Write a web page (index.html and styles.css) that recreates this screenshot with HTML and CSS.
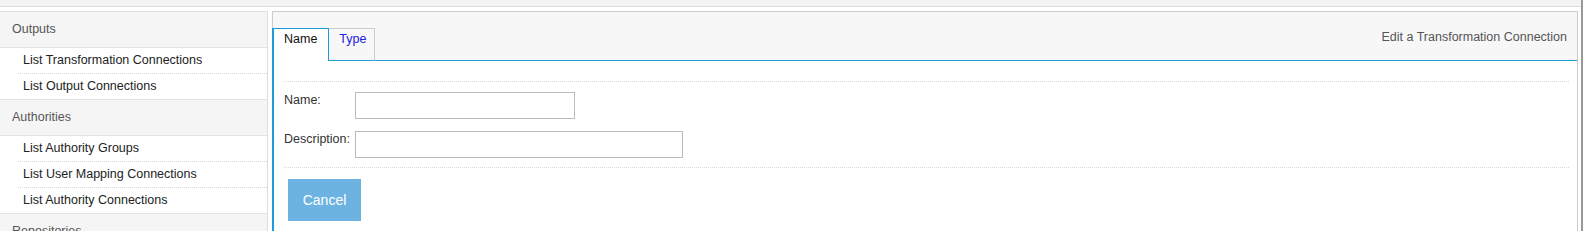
FILE: index.html
```html
<!DOCTYPE html>
<html>
	<head>
		<meta charset="UTF-8">
		<title>Edit a Transformation Connection</title>
		<link rel="stylesheet" href="styles.css">
	</head>
	<body>
		<div class="page">
			<div class="topbar"></div>
			<div class="layout">
				<div class="sidebar">
					<div class="group">Outputs</div>
					<a class="item">List Transformation Connections</a>
					<a class="item">List Output Connections</a>
					<div class="group">Authorities</div>
					<a class="item">List Authority Groups</a>
					<a class="item">List User Mapping Connections</a>
					<a class="item">List Authority Connections</a>
					<div class="group">Repositories</div>
				</div>
				<div class="panel">
					<div class="panel-head">
						<div class="tabs">
							<span class="tab active">Name</span>
							<a class="tab">Type</a>
							<div class="tab-fill">Edit a Transformation Connection</div>
						</div>
					</div>
					<div class="panel-body">
						<div class="form">
							<label class="label">Name:</label>
							<input class="field short" type="text">
							<label class="label">Description:</label>
							<input class="field long" type="text">
						</div>
						<div class="actions">
							<button class="btn">Cancel</button>
						</div>
					</div>
				</div>
			</div>
		</div>
	</body>
</html>
```

FILE: styles.css
```css
body{
	margin: 0;
	height: 231px;
	overflow: hidden;
	background: #fff;
	font-family: "Liberation Sans", Arial, sans-serif;
	font-size: 12.5px;
	color: #333;
}
.page{
	width: 1581px;
	height: 231px;
	overflow: hidden;
	border-right: 2px solid #999;
}
.topbar{
	height: 6px;
	background: #f3f3f3;
	border-bottom: 1px solid #ddd;
}
.layout{
	display: flex;
	padding-top: 4px;
	height: 220px;
}

/* left menu */
.sidebar{
	flex: none;
	width: 267px;
	border-top: 1px solid #ddd;
	border-right: 1px solid #ddd;
}
.group{
	height: 35px;
	line-height: 35px;
	padding-left: 12px;
	background: #f5f5f5;
	color: #555;
	border-bottom: 1px solid #e2e2e2;
}
.item + .group{
	border-top: 1px solid #e2e2e2;
}
.item{
	display: block;
	height: 25px;
	line-height: 25px;
	margin-left: 18px;
	padding-left: 5px;
	color: #222;
}
.item + .item{
	border-top: 1px dotted #d8d8d8;
}

/* right panel */
.panel{
	flex: 1;
	margin-left: 4px;
	margin-right: 3px;
	border-top: 1px solid #ccc;
	border-right: 1px solid #ccc;
}
.panel-head{
	background: #f7f7f7;
	padding-top: 16px;
	border-left: 1px solid #ccc;
}
.tabs{
	display: flex;
	margin-left: -1px;
}
.tab{
	box-sizing: border-box;
	height: 33px;
	padding: 3px 8px 0 10px;
	line-height: 14px;
}
.tab.active{
	padding-right: 11px;
	background: #fff;
	color: #111;
	border-top: 1px solid #219bd6;
	border-left: 2px solid #219bd6;
	border-right: 1px solid #219bd6;
}
a.tab{
	color: #2020e0;
	border-top: 1px solid #ccc;
	border-right: 1px solid #ccc;
	border-bottom: 1px solid #219bd6;
}
.tab-fill{
	flex: 1;
	height: 33px;
	box-sizing: border-box;
	padding: 2px 10px 0 0;
	line-height: 14px;
	text-align: right;
	color: #555;
	border-bottom: 1px solid #219bd6;
}
.panel-body{
	border-left: 2px solid #219bd6;
	padding: 20px 8px 0 10px;
	height: 150px;
}
.form{
	display: grid;
	grid-template-columns: max-content max-content;
	column-gap: 5px;
	row-gap: 12px;
	padding: 10px 0 9px;
	border-top: 1px dotted #d8d8d8;
	border-bottom: 1px dotted #d8d8d8;
}
.label{
	line-height: 16px;
	align-self: start;
	color: #333;
}
.field{
	box-sizing: border-box;
	height: 27px;
	margin: 0;
	border: 1px solid #bbb;
	padding: 2px 4px;
	font: inherit;
}
.field.short{
	width: 220px;
}
.field.long{
	width: 328px;
}
.actions{
	padding: 11px 0 0 4px;
}
.btn{
	width: 73px;
	height: 42px;
	border: none;
	background: #6db3e1;
	color: #fff;
	font-family: "Liberation Sans", Arial, sans-serif;
	font-size: 14px;
}
```
